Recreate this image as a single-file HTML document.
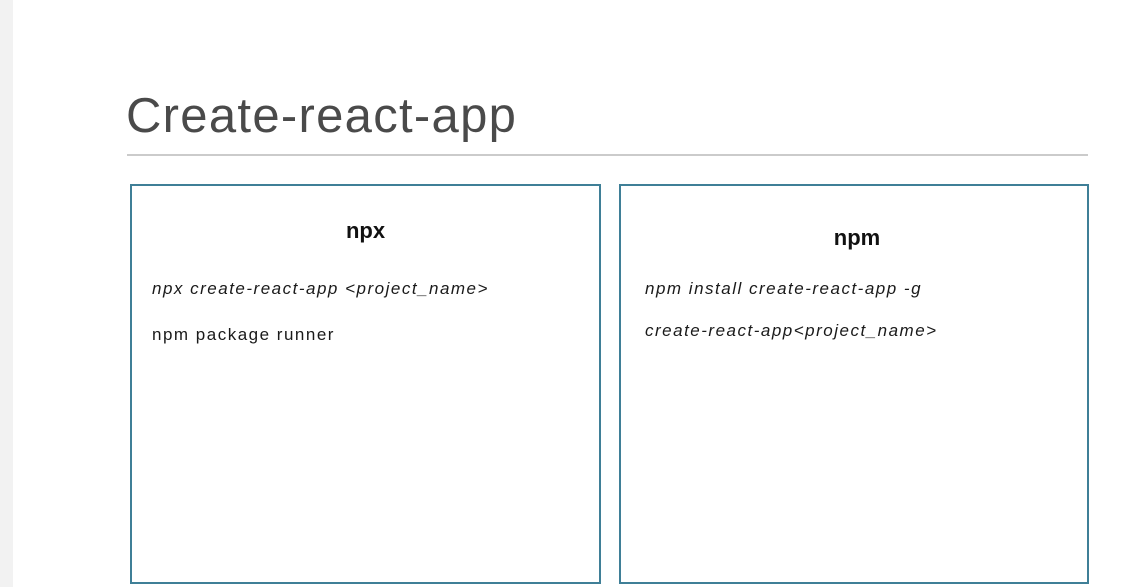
<!DOCTYPE html>
<html><head><style>
body{margin:0;width:1143px;height:587px;background:#fff;position:relative;overflow:hidden;font-family:"Liberation Sans",sans-serif;color:#111}
.strip{position:absolute;left:0;top:0;width:13px;height:587px;background:#f2f2f2}
.title{position:absolute;left:126px;top:86px;font-size:49px;color:#4a4a4a;letter-spacing:1.3px;line-height:60px;font-weight:normal}
.rule{position:absolute;left:127px;top:154px;width:961px;height:2px;background:#cbcbcb}
.box{position:absolute;top:184px;height:400px;border:2px solid #3f7f97;box-sizing:border-box}
.h{position:absolute;font-weight:bold;font-size:22px;width:100%;text-align:center}
.t{position:absolute;font-size:17px;letter-spacing:1.5px;white-space:nowrap;color:#1a1a1a}
i{font-style:italic}
</style></head><body>
<div class="strip"></div>
<div class="title">Create-react-app</div>
<div class="rule"></div>
<div class="box" style="left:130px;width:471px">
  <div class="h" style="top:32px">npx</div>
  <div class="t" style="left:20px;top:93px"><i>npx create-react-app &lt;project_name&gt;</i></div>
  <div class="t" style="left:20px;top:139px">npm package runner</div>
</div>
<div class="box" style="left:619px;width:470px">
  <div class="h" style="top:39px;padding-left:6px;box-sizing:border-box">npm</div>
  <div class="t" style="left:24px;top:93px"><i>npm install create-react-app -g</i></div>
  <div class="t" style="left:24px;top:135px"><i>create-react-app&lt;project_name&gt;</i></div>
</div>
</body></html>
